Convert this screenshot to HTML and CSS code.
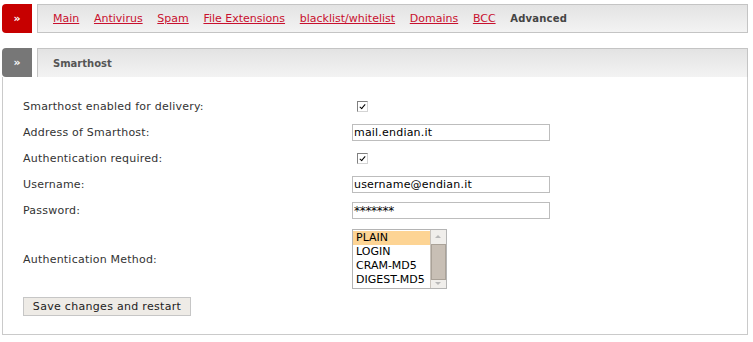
FILE: index.html
```html
<!DOCTYPE html>
<html>
<head>
<meta charset="utf-8">
<link rel="stylesheet" href="styles.css">
</head>
<body>
<div class="topnav">
  <div class="tab-icon red">&raquo;</div>
  <div class="bar">
    <a href="#">Main</a>
    <a href="#">Antivirus</a>
    <a href="#">Spam</a>
    <a href="#">File Extensions</a>
    <a href="#">blacklist/whitelist</a>
    <a href="#">Domains</a>
    <a href="#">BCC</a>
    <span class="current">Advanced</span>
  </div>
</div>

<div class="section">
  <div class="section-head">
    <div class="tab-icon gray">&raquo;</div>
    <div class="bar title">Smarthost</div>
  </div>
  <div class="panel">
    <div class="form">
      <div class="row">
        <span class="label">Smarthost enabled for delivery:</span>
        <span class="check"></span>
      </div>
      <div class="row">
        <span class="label">Address of Smarthost:</span>
        <span class="input">mail.endian.it</span>
      </div>
      <div class="row">
        <span class="label">Authentication required:</span>
        <span class="check"></span>
      </div>
      <div class="row">
        <span class="label">Username:</span>
        <span class="input">username@endian.it</span>
      </div>
      <div class="row">
        <span class="label">Password:</span>
        <span class="input pw">*******</span>
      </div>
      <div class="row tall">
        <span class="label">Authentication Method:</span>
        <div class="listbox">
          <div class="options">
            <div class="opt sel">PLAIN</div>
            <div class="opt">LOGIN</div>
            <div class="opt">CRAM-MD5</div>
            <div class="opt">DIGEST-MD5</div>
          </div>
          <div class="scroll">
            <div class="arrow up"></div>
            <div class="thumb"></div>
            <div class="arrow down"></div>
          </div>
        </div>
      </div>
    </div>
    <button class="btn">Save changes and restart</button>
  </div>
</div>
</body>
</html>
```
FILE: styles.css
```css
html, body {
  margin: 0;
  background: #fff;
}
body {
  padding: 4px 5px 0 2px;
  font-family: "DejaVu Sans", Verdana, sans-serif;
  font-size: 11px;
  color: #333;
}
.topnav, .section-head {
  display: flex;
  gap: 5px;
  height: 29px;
}
.tab-icon {
  width: 30px;
  height: 29px;
  flex: none;
  color: #fff;
  font-weight: bold;
  font-size: 11px;
  display: flex;
  align-items: center;
  justify-content: center;
  border-radius: 4px 0 0 4px;
  line-height: 1;
}
.tab-icon.red { background: #c70000; }
.tab-icon.gray { background: #777; }
.bar {
  flex: 1;
  box-sizing: border-box;
  height: 29px;
  border: 1px solid #c4c4c4;
  background: linear-gradient(#e3e3e3, #f3f3f3);
  display: flex;
  align-items: center;
  padding-left: 15px;
  gap: 14.7px;
}
.bar a {
  color: #c8102e;
  text-decoration: underline;
}
.bar .current {
  font-weight: bold;
  font-size: 10px;
  letter-spacing: 0.2px;
  color: #444;
}
.bar.title {
  font-weight: bold;
  font-size: 10px;
  color: #555;
  border-bottom: none;
}
.section {
  margin-top: 15px;
}
.panel {
  border: 1px solid #cacaca;
  border-top: none;
  padding: 16px 0 18px 20px;
}
.form {
  display: flex;
  flex-direction: column;
}
.row {
  display: grid;
  grid-template-columns: 329px auto;
  align-items: center;
  height: 26px;
}
.row.tall {
  height: auto;
  padding-top: 6px;
}
.label {
  color: #333;
  letter-spacing: 0.22px;
  padding-top: 1px;
}
.check {
  margin-left: 5px;
  width: 11px;
  height: 11px;
  box-sizing: border-box;
  border: 1px solid #d4d4d4;
  border-top-color: #808080;
  border-left-color: #808080;
  background: #fff;
  position: relative;
}
.check::after {
  content: "";
  position: absolute;
  left: 3px;
  top: 1px;
  width: 2px;
  height: 5px;
  border: solid #000;
  border-width: 0 1.5px 1.5px 0;
  transform: rotate(40deg);
}
.input {
  box-sizing: border-box;
  width: 198px;
  height: 17px;
  border: 1px solid #bdbdbd;
  padding: 0 1px;
  line-height: 15px;
  color: #000;
  font-size: 11px;
  letter-spacing: 0.2px;
}
.input.pw {
  font-size: 12px;
  letter-spacing: -0.3px;
  line-height: 16px;
}
.listbox {
  box-sizing: border-box;
  width: 95px;
  height: 60px;
  border: 1px solid #b4b4b4;
  display: flex;
  background: #fff;
}
.options {
  flex: 1;
  padding-top: 1px;
}
.opt {
  height: 14px;
  line-height: 14px;
  padding-left: 3px;
  color: #000;
}
.opt.sel {
  background: #fdd494;
}
.scroll {
  width: 15px;
  display: flex;
  flex-direction: column;
  background: #eeebe7;
  border-left: 1px solid #c9c3bc;
}
.arrow {
  height: 14px;
  background: #f0eeeb;
  position: relative;
}
.arrow::after {
  content: "";
  position: absolute;
  left: 4px;
  border-left: 3px solid transparent;
  border-right: 3px solid transparent;
}
.arrow.up::after {
  top: 5px;
  border-bottom: 3px solid #b8b8b8;
}
.arrow.down {
  height: 8px;
}
.arrow.down::after {
  top: 2px;
  border-top: 3px solid #b8b8b8;
}
.thumb {
  flex: 1;
  background: #c8bfb5;
  border: 1px solid #aaa298;
}
.btn {
  margin-top: 8px;
  height: 19px;
  padding: 0;
  font-family: "DejaVu Sans", Verdana, sans-serif;
  font-size: 11px;
  letter-spacing: 0.3px;
  color: #222;
  background: #eeebe6;
  border: 1px solid #c6c6c6;
  border-radius: 0;
  width: 168px;
  line-height: 15px;
}
```
